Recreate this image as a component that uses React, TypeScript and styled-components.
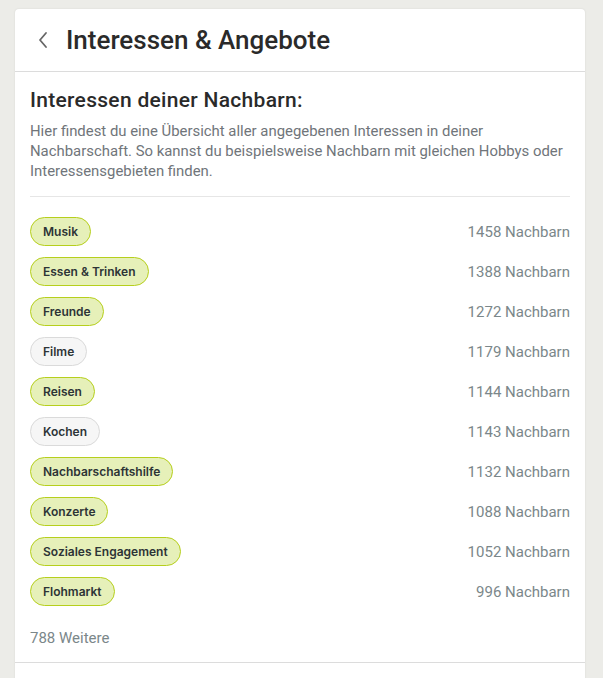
import React from "react";
import styled, { createGlobalStyle } from "styled-components";

const GlobalStyle = createGlobalStyle`
  html, body {
    margin: 0;
    padding: 0;
    background: #ecece8;
    font-family: Roboto, "Liberation Sans", sans-serif;
  }
`;

type Interest = { name: string; count: number; active: boolean };

const interests: Interest[] = [
  { name: "Musik", count: 1458, active: true },
  { name: "Essen & Trinken", count: 1388, active: true },
  { name: "Freunde", count: 1272, active: true },
  { name: "Filme", count: 1179, active: false },
  { name: "Reisen", count: 1144, active: true },
  { name: "Kochen", count: 1143, active: false },
  { name: "Nachbarschaftshilfe", count: 1132, active: true },
  { name: "Konzerte", count: 1088, active: true },
  { name: "Soziales Engagement", count: 1052, active: true },
  { name: "Flohmarkt", count: 996, active: true },
];

const App: React.FC = () => {
  return (
    <>
      <GlobalStyle />
      <Page>
        <Card>
          <CardHeader>
            <BackButton aria-label="Zurück">
              <svg width="12" height="18" viewBox="0 0 12 18">
                <path
                  d="M9 2 L3 9 L9 16"
                  fill="none"
                  stroke="#666"
                  strokeWidth="1.8"
                  strokeLinecap="round"
                  strokeLinejoin="round"
                />
              </svg>
            </BackButton>
            <Title>Interessen &amp; Angebote</Title>
          </CardHeader>
          <CardBody>
            <SubTitle>Interessen deiner Nachbarn:</SubTitle>
            <Description>
              Hier findest du eine Übersicht aller angegebenen Interessen in
              deiner Nachbarschaft. So kannst du beispielsweise Nachbarn mit
              gleichen Hobbys oder Interessensgebieten finden.
            </Description>
            <Divider />
            <List>
              {interests.map((item) => (
                <Row key={item.name}>
                  <Pill $active={item.active}>{item.name}</Pill>
                  <Count>{item.count} Nachbarn</Count>
                </Row>
              ))}
            </List>
            <More>788 Weitere</More>
          </CardBody>
          <CardFooter />
        </Card>
      </Page>
    </>
  );
};

export default App;

const Page = styled.div`
  padding: 9px 18px 0 15px;
`;

const Card = styled.div`
  background: #fff;
  border-radius: 4px 4px 0 0;
  box-shadow: 0 0 2px rgba(0, 0, 0, 0.1);
`;

const CardHeader = styled.div`
  display: flex;
  align-items: center;
  height: 62px;
  padding: 0 22px;
  border-bottom: 1px solid #dcdcdc;
`;

const BackButton = styled.button`
  display: flex;
  align-items: center;
  border: none;
  background: none;
  padding: 0;
  margin-right: 17px;
  cursor: pointer;
`;

const Title = styled.h1`
  margin: 0;
  font-size: 26px;
  font-weight: 500;
  color: #2a2a2a;
`;

const CardBody = styled.div`
  padding: 16px 15px 0 15px;
`;

const SubTitle = styled.h2`
  margin: 0;
  font-size: 21px;
  font-weight: 500;
  letter-spacing: 0.3px;
  color: #2a2a2a;
`;

const Description = styled.p`
  margin: 9px 0 0;
  font-size: 14.9px;
  letter-spacing: 0;
  line-height: 20px;
  color: #70757a;
`;

const Divider = styled.hr`
  margin: 15px 0 20px;
  border: none;
  border-top: 1px solid #e6e6e6;
`;

const List = styled.div`
  display: flex;
  flex-direction: column;
  gap: 11px;
`;

const Row = styled.div`
  display: flex;
  align-items: center;
  justify-content: space-between;
`;

const Pill = styled.span<{ $active: boolean }>`
  display: inline-flex;
  align-items: center;
  height: 27px;
  padding: 0 12px;
  border-radius: 15px;
  font-family: Inter, "Liberation Sans", sans-serif;
  font-size: 12px;
  font-weight: 600;
  color: #2d3436;
  background: ${(p) => (p.$active ? "#e6f0b9" : "#f6f6f6")};
  border: 1px solid ${(p) => (p.$active ? "#b6cf1c" : "#dadada")};
`;

const Count = styled.span`
  font-size: 15px;
  color: #7b878a;
`;

const More = styled.div`
  margin-top: 23px;
  padding-bottom: 15px;
  font-size: 15px;
  color: #7b878a;
`;

const CardFooter = styled.div`
  height: 16px;
  border-top: 1px solid #dcdcdc;
`;
